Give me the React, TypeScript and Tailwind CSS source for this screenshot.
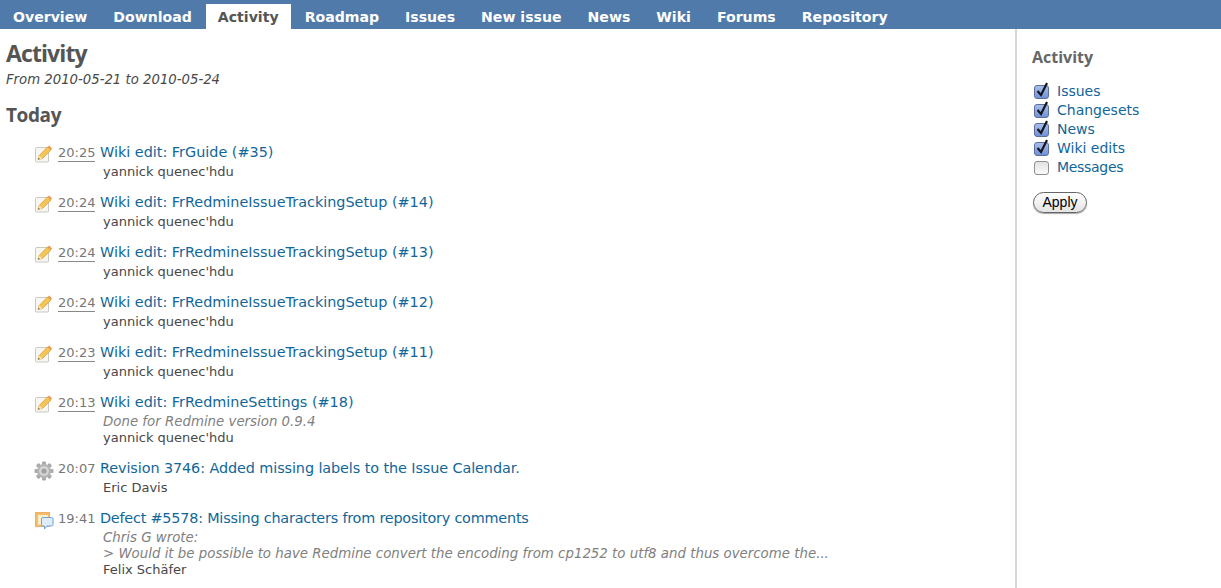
const tabs = ['Overview', 'Download', 'Activity', 'Roadmap', 'Issues', 'New issue', 'News', 'Wiki', 'Forums', 'Repository']

type Kind = 'wiki' | 'rev' | 'defect'
interface Entry {
  kind: Kind
  time: string
  title: string
  author: string
  notes?: string[]
  underline?: boolean
  titleClass?: string
}

const entries: Entry[] = [
  { kind: 'wiki', time: '20:25', title: 'Wiki edit: FrGuide (#35)', author: "yannick quenec'hdu", underline: true },
  { kind: 'wiki', time: '20:24', title: 'Wiki edit: FrRedmineIssueTrackingSetup (#14)', author: "yannick quenec'hdu", underline: true },
  { kind: 'wiki', time: '20:24', title: 'Wiki edit: FrRedmineIssueTrackingSetup (#13)', author: "yannick quenec'hdu", underline: true },
  { kind: 'wiki', time: '20:24', title: 'Wiki edit: FrRedmineIssueTrackingSetup (#12)', author: "yannick quenec'hdu", underline: true },
  { kind: 'wiki', time: '20:23', title: 'Wiki edit: FrRedmineIssueTrackingSetup (#11)', author: "yannick quenec'hdu", underline: true },
  { kind: 'wiki', time: '20:13', title: 'Wiki edit: FrRedmineSettings (#18)', author: "yannick quenec'hdu", notes: ['Done for Redmine version 0.9.4'], underline: true },
  { kind: 'rev', time: '20:07', title: 'Revision 3746: Added missing labels to the Issue Calendar.', author: 'Eric Davis', titleClass: 'tracking-[-0.09px]' },
  {
    kind: 'defect',
    time: '19:41',
    title: 'Defect #5578: Missing characters from repository comments',
    author: 'Felix Schäfer',
    notes: ['Chris G wrote:', '> Would it be possible to have Redmine convert the encoding from cp1252 to utf8 and thus overcome the...'],
    titleClass: 'tracking-[-0.21px]',
  },
]

const filters = [
  { label: 'Issues', on: true },
  { label: 'Changesets', on: true },
  { label: 'News', on: true },
  { label: 'Wiki edits', on: true },
  { label: 'Messages', on: false },
]

function WikiIcon() {
  return (
    <svg width="17" height="18" viewBox="0 0 17 18" className="shrink-0">
      <rect x="0.5" y="2.5" width="13" height="14.5" rx="1" fill="#f6f6f2" stroke="#c9c9c4" />
      <path d="M3 14.5 L4.2 10.5 L12.5 2 L16 5 L7.5 13.5 Z" fill="#f3c555" stroke="#d9962e" strokeWidth="0.7" />
      <path d="M12.5 2 L16 5 L17 3.6 L14.2 0.6 Z" fill="#ec9a50" />
      <path d="M3 14.5 L4.2 10.5 L7.5 13.5 Z" fill="#f5e4bc" />
      <path d="M3 14.5 L3.5 12.8 L4.9 14 Z" fill="#6d5a3a" />
    </svg>
  )
}

function GearIcon() {
  const teeth = [0, 45, 90, 135, 180, 225, 270, 315]
  return (
    <svg width="20" height="20" viewBox="0 0 20 20" className="shrink-0">
      {teeth.map(a => (
        <rect key={a} x="8" y="0.5" width="4" height="5" rx="1" fill="#a9a9a9" transform={`rotate(${a} 10 10)`} />
      ))}
      <circle cx="10" cy="10" r="7" fill="#b5b5b5" />
      <circle cx="10" cy="10" r="4.8" fill="#d6d6d6" />
      <circle cx="10" cy="10" r="2.6" fill="#a0a0a0" />
    </svg>
  )
}

function DefectIcon() {
  return (
    <svg width="20" height="20" viewBox="0 0 20 20" className="shrink-0">
      <rect x="1.5" y="1.5" width="14" height="14" fill="#f5bc6b" stroke="#eeb060" />
      <rect x="4" y="4" width="10" height="9.5" fill="#fdeecb" />
      <path d="M9 6.5 h8.5 a1.5 1.5 0 0 1 1.5 1.5 v5.5 a1.5 1.5 0 0 1 -1.5 1.5 h-4.5 l-2.5 3 v-3 h-1.5 a1.5 1.5 0 0 1 -1.5 -1.5 v-5.5 a1.5 1.5 0 0 1 1.5 -1.5 Z" fill="#dfecfa" stroke="#6fa3d6" />
    </svg>
  )
}

function EntryIcon({ kind }: { kind: Kind }) {
  if (kind === 'wiki') return <WikiIcon />
  if (kind === 'rev') return <GearIcon />
  return <DefectIcon />
}

function ActivityRow({ kind, time, title, author, notes, underline, titleClass }: Entry) {
  return (
    <li className="relative pl-[94px] mb-[13px]">
      <span className="absolute left-[27px] top-[2px] flex w-[21px] justify-center">
        <EntryIcon kind={kind} />
      </span>
      <span className={`absolute left-[52px] top-[2px] text-[13px] leading-[16px] text-[#777777] ${underline ? 'border-b border-[#888888]' : ''}`}>
        {time}
      </span>
      <a className={`block text-[14.4px] leading-[19px] text-[#169] whitespace-nowrap ${titleClass ?? ''}`}>{title}</a>
      <div className="pl-[3px] pt-[1px]">
        {notes && (
          <div className="pt-[1px] -mb-[1px] text-[13.35px] leading-[16px] italic text-[#808080] whitespace-nowrap">
            {notes.map(n => <div key={n}>{n}</div>)}
          </div>
        )}
        <div className="text-[13px] leading-[17px] text-[#484848]">{author}</div>
      </div>
    </li>
  )
}

function Checkbox({ on }: { on: boolean }) {
  return (
    <span className={`relative h-[14px] w-[15px] rounded-[3px] border shrink-0 ${on ? 'border-[#5a6d9c] bg-gradient-to-b from-[#a9bdea] to-[#7092d6]' : 'border-[#8f8f8f] bg-gradient-to-b from-[#e2e2e2] to-[#fafafa]'}`}>
      {on && (
        <svg width="15" height="17" viewBox="0 0 15 17" className="absolute left-[-1px] top-[-5px]">
          <path d="M3.5 10 L7 14 L13 2" fill="none" stroke="#16161c" strokeWidth="2.2" />
        </svg>
      )}
    </span>
  )
}

export default function App() {
  return (
    <div className="h-[588px] overflow-hidden bg-white font-['DejaVu_Sans',Verdana,sans-serif]">
      <nav className="flex h-[29px] items-end gap-[2px] bg-[#507aaa] pl-[1px]">
        {tabs.map(tab => (
          <a
            key={tab}
            className={`h-[25px] px-[12px] text-[14.1px] font-bold leading-[27px] whitespace-nowrap ${tab === 'Activity' ? 'bg-white text-[#555555]' : 'text-white'}`}
          >
            {tab}
          </a>
        ))}
      </nav>
      <div className="flex">
        <main className="w-[1015px] shrink-0 pl-[6px] pt-[9px]">
          <h2 className="font-['Open_Sans',sans-serif] text-[23px] font-bold leading-[30px] tracking-[-0.9px] text-[#555555]">Activity</h2>
          <p className="mt-[4px] text-[13.25px] leading-[16px] italic text-[#484848]">From 2010-05-21 to 2010-05-24</p>
          <h3 className="mt-[14px] font-['Open_Sans',sans-serif] text-[19px] font-bold leading-[26px] tracking-[-0.4px] text-[#555555]">Today</h3>
          <ul className="mt-[15px]">
            {entries.map((e, i) => <ActivityRow key={i} {...e} />)}
          </ul>
        </main>
        <aside className="h-[559px] flex-1 border-l-2 border-[#d7d7d7] pl-[15px] pt-[18px]">
          <h3 className="font-['Open_Sans',sans-serif] text-[16px] font-bold leading-[20px] text-[#666666]">Activity</h3>
          <ul className="mt-[15px]">
            {filters.map(f => (
              <li key={f.label} className="flex h-[19px] items-center gap-[8px] pl-[2px]">
                <Checkbox on={f.on} />
                <a className={`text-[14px] leading-[19px] text-[#169] ${f.label === 'Messages' ? 'tracking-[-0.3px]' : ''}`}>{f.label}</a>
              </li>
            ))}
          </ul>
          <button className="ml-[1px] mt-[15px] flex h-[21px] w-[54px] items-center justify-center rounded-full border border-[#666666] bg-gradient-to-b from-white to-[#e4e4e4] text-[14px] text-black shadow-[0_1px_1px_rgba(0,0,0,0.35)] font-['Liberation_Sans',sans-serif]">
            Apply
          </button>
        </aside>
      </div>
    </div>
  )
}
